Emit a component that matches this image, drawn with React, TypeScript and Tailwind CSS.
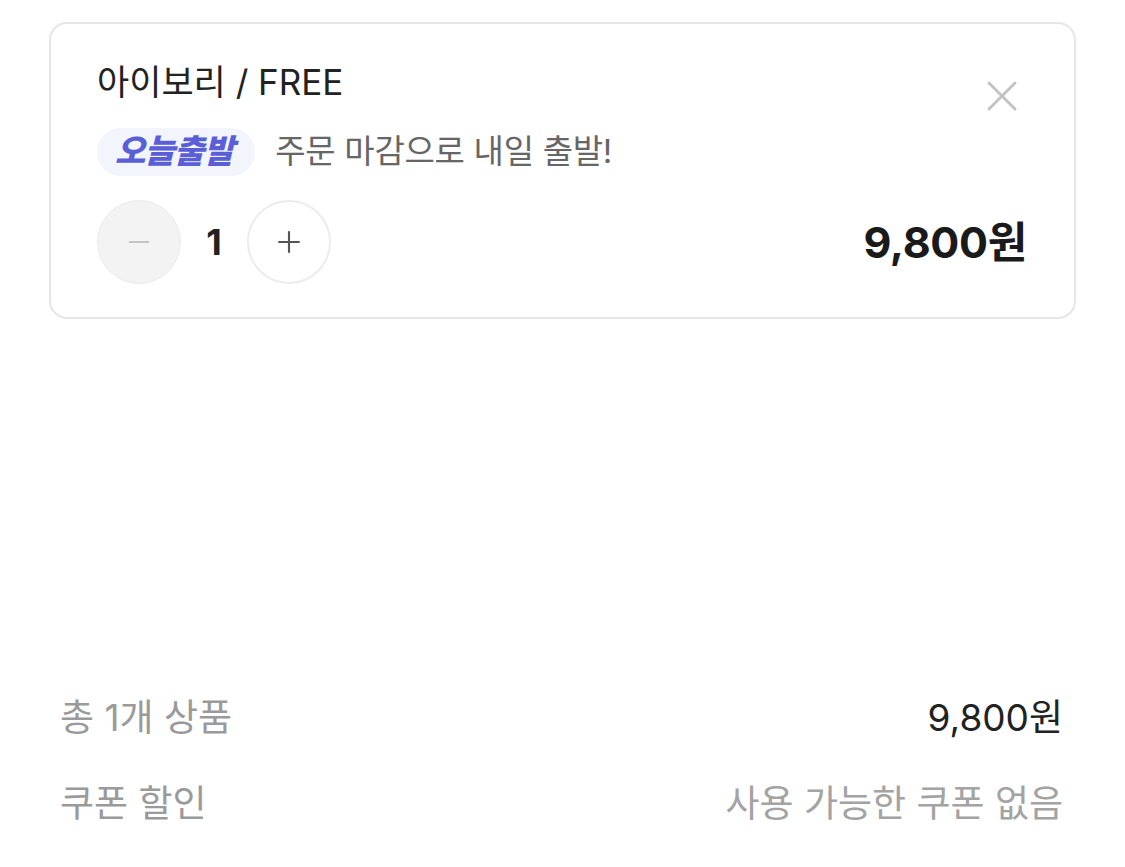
import { X, Minus, Plus } from "lucide-react";

const font = { fontFamily: '"Inter", "Noto Sans CJK KR", sans-serif' };

/**
 * 장바구니 옵션 카드 + 합계 영역
 */
export default function App() {
  return (
    <div className="min-h-screen bg-white text-[#222]" style={font}>
      {/* 옵션 카드 */}
      <div className="relative mx-[49px] mt-[22px] rounded-[18px] border-2 border-[#e6e6e6] pl-[46px] pr-[47px] pt-[37px] pb-[33px]">
        <button className="absolute right-[46px] top-[46px] text-[#c2c2c2]">
          <X className="h-[52px] w-[52px]" strokeWidth={1.3} />
        </button>

        <h2 className="text-[35px] leading-[42px] font-normal text-[#222]">
          아이보리 / FREE
        </h2>

        <div className="mt-[25px] flex h-[48px] items-center gap-[20px]">
          <span className="flex h-[48px] items-center rounded-full bg-[#f2f5fc] pl-[18px] pr-[22px] text-[33px] font-extrabold italic tracking-[-0.8px] text-[#5a5fd8]">
            오늘출발
          </span>
          <span className="text-[33px] tracking-[-0.3px] text-[#666]">주문 마감으로 내일 출발!</span>
        </div>

        <div className="mt-[24px] flex items-center justify-between">
          <div className="flex items-center">
            <button className="flex h-[84px] w-[84px] items-center justify-center rounded-full border border-[#ebebeb] bg-[#f3f3f3] text-[#c4c4c4]">
              <Minus className="h-[32px] w-[32px]" strokeWidth={1.5} />
            </button>
            <span className="w-[66px] text-center text-[36px] font-bold text-[#222]">1</span>
            <button className="flex h-[84px] w-[84px] items-center justify-center rounded-full border-2 border-[#ececec] bg-white text-[#555]">
              <Plus className="h-[34px] w-[34px]" strokeWidth={1.5} />
            </button>
          </div>
          <span className="text-[43px] font-bold tracking-[-0.3px] text-[#1a1a1a]">9,800원</span>
        </div>
      </div>

      {/* 합계 */}
      <div className="mt-[376px] flex flex-col gap-[40px] pl-[60px] pr-[62px]">
        <div className="flex items-center justify-between text-[37px] leading-[46px]">
          <span className="text-[#9a9a9a]">총 1개 상품</span>
          <span className="text-[#222]">9,800원</span>
        </div>
        <div className="flex items-center justify-between text-[37px] leading-[46px]">
          <span className="text-[#9a9a9a]">쿠폰 할인</span>
          <span className="text-[#a3a3a3]">사용 가능한 쿠폰 없음</span>
        </div>
      </div>
    </div>
  );
}
